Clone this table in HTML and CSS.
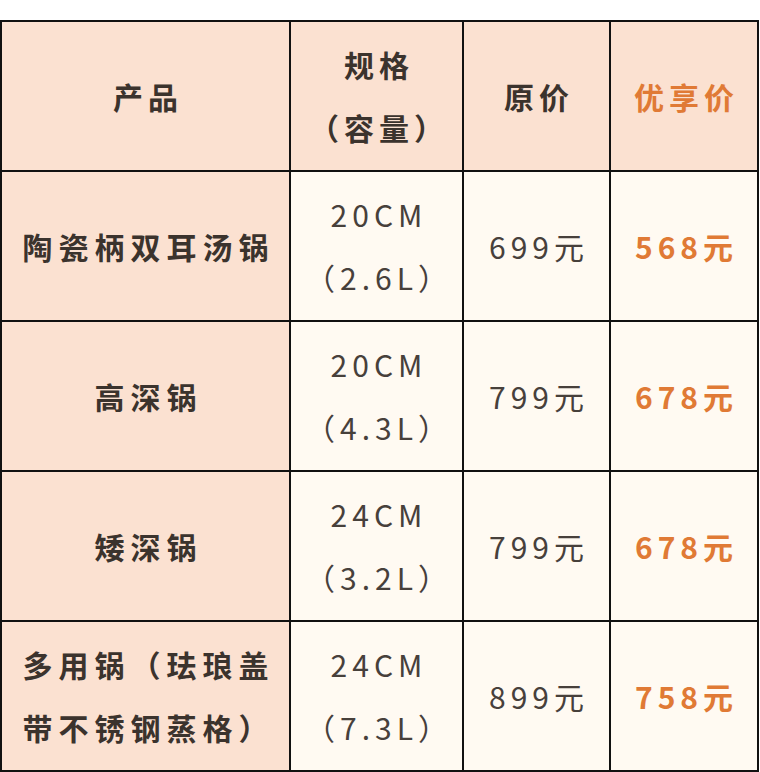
FILE: index.html
```html
<!DOCTYPE html>
<html lang="zh-CN">
<head>
<meta charset="utf-8">
<link rel="stylesheet" href="styles.css">
</head>
<body>
<div class="table">
  <div class="cell head">产品</div>
  <div class="cell head">规格<br>（容量）</div>
  <div class="cell head">原价</div>
  <div class="cell head hl">优享价</div>

  <div class="cell name">陶瓷柄双耳汤锅</div>
  <div class="cell spec">20CM<br>（2.6L）</div>
  <div class="cell price">699元</div>
  <div class="cell deal">568元</div>

  <div class="cell name">高深锅</div>
  <div class="cell spec">20CM<br>（4.3L）</div>
  <div class="cell price">799元</div>
  <div class="cell deal">678元</div>

  <div class="cell name">矮深锅</div>
  <div class="cell spec">24CM<br>（3.2L）</div>
  <div class="cell price">799元</div>
  <div class="cell deal">678元</div>

  <div class="cell name">多用锅（珐琅盖<br>带不锈钢蒸格）</div>
  <div class="cell spec">24CM<br>（7.3L）</div>
  <div class="cell price">899元</div>
  <div class="cell deal">758元</div>
</div>
</body>
</html>
```
FILE: styles.css
```css
html, body {
  margin: 0;
  padding: 0;
  background: #ffffff;
}
body {
  padding-top: 20px;
  font-family: "Noto Sans CJK SC", "Noto Sans", sans-serif;
}
.table {
  box-sizing: border-box;
  width: 759px;
  padding: 2px;
  background: #111111;
  display: grid;
  grid-template-columns: 287px 171px 145px 146px;
  grid-auto-rows: 148px;
  gap: 2px;
}
.cell {
  display: flex;
  align-items: center;
  justify-content: center;
  text-align: center;
  font-size: 30px;
  line-height: 63px;
  letter-spacing: 5px;
  padding-left: 5px;
  color: #3b332d;
  background: #fffaf2;
}
.head {
  background: #fbe1d1;
  font-weight: 700;
}
.head.hl {
  color: #e07a35;
}
.name {
  background: #fbe1d1;
  font-weight: 700;
  letter-spacing: 6px;
  padding-left: 6px;
}
.spec, .price {
  color: #47403b;
  font-weight: 400;
}
.deal {
  color: #e07a35;
  font-weight: 700;
}
```
